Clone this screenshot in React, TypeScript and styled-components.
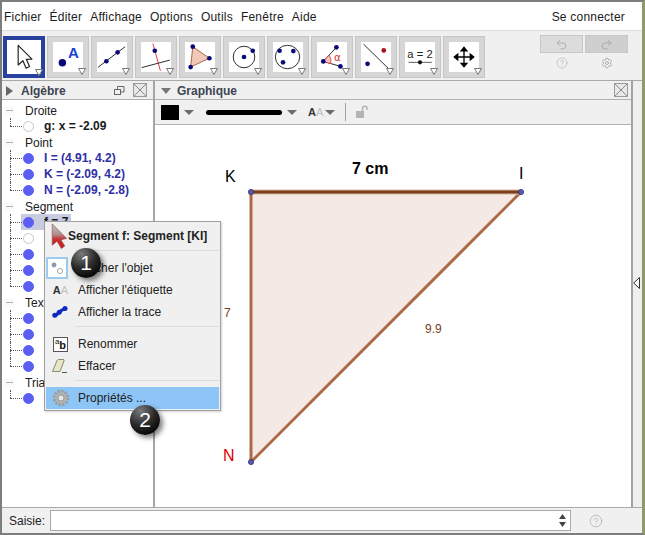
import React from 'react';
import styled, { createGlobalStyle } from 'styled-components';
import { CircleHelp, Settings, Undo2, Redo2 } from 'lucide-react';

const GlobalStyle = createGlobalStyle`
  html, body { margin: 0; padding: 0; background: #fff; }
  * { box-sizing: border-box; }
  body { font-family: "Liberation Sans", Arial, sans-serif; font-size: 12px; color: #1c1c1c; }
`;

const Frame = styled.div`
  position: relative;
  width: 645px;
  height: 535px;
  display: flex;
  flex-direction: column;
  overflow: hidden;
  background: #fff;
  border-top: 2px solid #7d7d7d;
  border-left: 2px solid #7d7d7d;
  border-bottom: 2px solid #7d7d7d;
  border-right: 3px solid #8f9a66;
`;

const MenuBar = styled.div`
  height: 28px;
  flex: none;
  display: flex;
  align-items: center;
  gap: 8px;
  padding: 1px 17px 0 2px;
  letter-spacing: 0.22px;
  background: #fff;
  span:last-child { margin-left: auto; }
`;

const Toolbar = styled.div`
  height: 51px;
  flex: none;
  display: flex;
  gap: 2px;
  padding: 5px 3px 0 1px;
  background: #f0f0f0;
  border-top: 1px solid #dcdcdc;
  border-bottom: 1px solid #a8a8a8;
`;

const ToolButton = styled.div<{ $active?: boolean }>`
  position: relative;
  width: 42px;
  height: 42px;
  flex: none;
  padding: ${(p) => (p.$active ? '4px' : '5px')};
  background: ${(p) => (p.$active ? '#28419c' : '#d6d6d6')};
  border: ${(p) => (p.$active ? 'none' : '1px solid #c6c6c6')};
`;

const ToolFace = styled.div`
  width: 100%;
  height: 100%;
  background: #fff;
  svg { display: block; width: 100%; height: 100%; overflow: visible; }
`;

const ToolCaret = styled.svg`
  position: absolute;
  right: 2px;
  bottom: 2px;
  width: 8px;
  height: 7px;
`;

const HistoryBox = styled.div`
  margin-left: auto;
  display: grid;
  grid-template-columns: 43px 43px;
  grid-template-rows: 18px auto;
  column-gap: 2px;
  row-gap: 4px;
  margin-top: -1px;
  margin-right: 11px;
`;

const HistoryButton = styled.div<{ $dark?: boolean }>`
  display: flex;
  align-items: center;
  justify-content: center;
  color: #a3a3a3;
  background: ${(p) => (p.$dark ? '#cfcfcf' : '#dcdcdc')};
  border: 1px solid #c8c8c8;
`;

const HistoryIcon = styled.div`
  display: flex;
  justify-content: center;
  color: #b0b0b0;
`;

const Main = styled.div`
  flex: 1;
  display: flex;
  min-height: 0;
`;

const AlgebraPanel = styled.div`
  width: 153px;
  flex: none;
  display: flex;
  flex-direction: column;
  border-right: 2px solid #a6a6a6;
`;

const PanelHeader = styled.div<{ $right: number; $gap: number }>`
  height: 19px;
  flex: none;
  display: flex;
  align-items: center;
  gap: ${(p) => p.$gap}px;
  padding: 1px ${(p) => p.$right}px 0 4px;
  background: #f0f0f0;
  border-bottom: 1px solid #b0b0b0;
`;

const PanelTitle = styled.span`
  flex: 1;
  font-weight: bold;
  color: #3d4553;
`;

const CloseBox = styled.svg`
  width: 14px;
  height: 14px;
  flex: none;
  margin-top: -1px;
`;

const Tree = styled.div`
  padding: 2px 0 0 2px;
`;

const GroupHead = styled.div`
  height: 16px;
  display: flex;
  align-items: center;
  gap: 11px;
  padding-top: 1px;
  color: #202020;
  white-space: nowrap;
`;

const Minus = styled.span`
  width: 10px;
  height: 10px;
  flex: none;
  display: flex;
  align-items: center;
  justify-content: center;
  background: #fafafa;
  &::before { content: ''; width: 7px; height: 1px; background: #b4b4b4; }
`;

const Leaf = styled.div`
  position: relative;
  height: 16px;
  display: flex;
  align-items: center;
  padding-left: 19px;
  &::before {
    content: '';
    position: absolute;
    left: 6px;
    top: 0;
    height: 100%;
    border-left: 1px dotted #555;
  }
  &:last-child::before { height: 50%; }
  &::after {
    content: '';
    position: absolute;
    left: 6px;
    top: 50%;
    width: 12px;
    border-top: 1px dotted #555;
  }
`;

const LeafBody = styled.div<{ $selected?: boolean }>`
  height: 16px;
  display: flex;
  align-items: center;
  gap: 10px;
  padding: 0 3px 0 2px;
  background: ${(p) => (p.$selected ? '#c9cce0' : 'transparent')};
  margin-left: -2px;
`;

const Marble = styled.span<{ $off?: boolean }>`
  width: 11px;
  height: 11px;
  flex: none;
  border-radius: 50%;
  background: ${(p) => (p.$off ? '#fff' : '#5b5ef2')};
  border: 1px solid ${(p) => (p.$off ? '#c8c8c8' : '#5b5ef2')};
`;

const LeafText = styled.span<{ $blue?: boolean }>`
  font-weight: bold;
  white-space: nowrap;
  color: ${(p) => (p.$blue ? '#2e2ea6' : '#1a1a1a')};
`;

const GraphicsPanel = styled.div`
  flex: 1;
  min-width: 0;
  display: flex;
  flex-direction: column;
`;

const StyleBar = styled.div`
  height: 25px;
  flex: none;
  display: flex;
  align-items: center;
  padding-left: 6px;
  background: #f0f0f0;
  border-bottom: 1px solid #b0b0b0;
`;

const Swatch = styled.span`
  width: 18px;
  height: 15px;
  background: #000;
`;

const LineSample = styled.span`
  width: 76px;
  height: 5px;
  margin-left: 12px;
  border-radius: 3px;
  background: #000;
`;

const Caret = styled.span<{ $left?: number }>`
  width: 0;
  height: 0;
  margin-left: ${(p) => p.$left ?? 5}px;
  border-left: 5px solid transparent;
  border-right: 5px solid transparent;
  border-top: 5px solid #6c6c6c;
`;

const AaGlyph = styled.span`
  font-size: 11px;
  font-weight: bold;
  margin-left: 11px;
  color: #333;
  b { color: #bdbdbd; font-weight: normal; }
`;

const Divider = styled.span`
  width: 1px;
  height: 18px;
  margin: 0 9px 0 10px;
  background: #a0a0a0;
`;

const Canvas = styled.div`
  flex: 1;
  min-height: 0;
  background: #fff;
  svg { display: block; }
`;

const SideStrip = styled.div`
  width: 11px;
  flex: none;
  display: flex;
  align-items: center;
  padding: 0 0 23px 0;
  background: #efefef;
  border-left: 2px solid #a2a2a2;
`;

const InputBar = styled.div`
  height: 26px;
  flex: none;
  display: flex;
  align-items: center;
  padding: 0 21px 0 7px;
  background: #f0f0f0;
  border-top: 1px solid #a8a8a8;
`;

const InputLabel = styled.span`
  width: 41px;
  flex: none;
  color: #222;
`;

const InputField = styled.div`
  flex: 1;
  height: 21px;
  display: flex;
  align-items: center;
  justify-content: flex-end;
  padding-right: 4px;
  background: #fff;
  border: 1px solid #a9a9a9;
`;

const InputHelp = styled.div`
  width: 50px;
  flex: none;
  display: flex;
  justify-content: center;
  color: #b0b0b0;
`;

const ContextMenu = styled.div`
  position: absolute;
  left: 42px;
  top: 219px;
  width: 177px;
  height: 190px;
  padding: 0 1px;
  background: #f0f0f0;
  border: 1px solid #a0a0a0;
  box-shadow: 1px 1px 2px rgba(0, 0, 0, 0.18);
`;

const MenuTitle = styled.div`
  height: 28px;
  margin-bottom: -3px;
  display: flex;
  align-items: center;
  padding: 0 0 0 22px;
  font-weight: bold;
  color: #222;
  white-space: nowrap;
`;

const MenuRule = styled.div`
  height: 1px;
  margin: 3px 0 6px 29px;
  background: #dcdcdc;
`;

const MenuItem = styled.div<{ $hot?: boolean }>`
  height: 22px;
  display: flex;
  align-items: center;
  color: #222;
  background: ${(p) => (p.$hot ? '#8cc5f6' : 'transparent')};
`;

const MenuIcon = styled.span`
  width: 32px;
  height: 22px;
  flex: none;
  display: flex;
  align-items: center;
  justify-content: center;
`;

const ToggleIcon = styled.span`
  display: flex;
  width: 22px;
  height: 22px;
  background: #fff;
  border: 2px solid #9ccbf0;
  margin-left: -10px;
`;

const SmallAa = styled.span`
  font-size: 11px;
  font-weight: bold;
  color: #333;
  margin-left: -3px;
  b { color: #c0c0c0; font-weight: normal; }
`;

const RenameBox = styled.span`
  width: 15px;
  height: 15px;
  font-size: 11px;
  font-weight: bold;
  line-height: 15px;
  text-align: center;
  margin-left: -3px;
  background: #fff;
  border: 1px solid #555;
  color: #111;
  sup { font-size: 8px; font-weight: normal; line-height: 0; }
`;

const StepBadge = styled.div<{ $x: number; $y: number }>`
  position: absolute;
  left: ${(p) => p.$x}px;
  top: ${(p) => p.$y}px;
  width: 30px;
  height: 30px;
  display: flex;
  align-items: center;
  justify-content: center;
  border-radius: 50%;
  font-size: 21px;
  color: #fff;
  background: radial-gradient(circle at 35% 20%, #7a7a7a 0%, #2c2c2c 45%, #050505 80%);
  box-shadow: 3px 3px 5px rgba(0, 0, 0, 0.5);
`;

const Pointer = styled.svg`
  position: absolute;
  left: 46px;
  top: 220px;
  width: 20px;
  height: 27px;
`;

const caret = (
  <ToolCaret viewBox="0 0 8 7">
    <path d="M0.5 0.5H7.5L4 6.5Z" fill="#fff" stroke="#777" strokeWidth="1" />
  </ToolCaret>
);

const Dot = ({ x, y, r = 2.5, c = '#0a0a78' }: { x: number; y: number; r?: number; c?: string }) => (
  <circle cx={x} cy={y} r={r} fill={c} />
);

const toolIcons: React.ReactNode[] = [
  <path d="M10.5 5L10.5 23.5L15 19.5L18 26.5L21.2 25L18.2 18.2L23.5 18Z" fill="#fff" stroke="#222" strokeWidth="1.1" strokeLinejoin="round" />,
  <>
    <Dot x={10} y={22} r={4} />
    <text x={16} y={17} fontSize="16" fontWeight="bold" fill="#1a3fd0" fontFamily="Liberation Sans">A</text>
  </>,
  <>
    <line x1={1} y1={27} x2={30} y2={5} stroke="#222" />
    <Dot x={10} y={20.5} />
    <Dot x={22} y={11} />
  </>,
  <>
    <line x1={12.7} y1={1.7} x2={20.7} y2={30.7} stroke="#e0303c" />
    <line x1={0.7} y1={27.3} x2={30.7} y2={19.3} stroke="#222" />
    <Dot x={14.7} y={9.3} />
  </>,
  <>
    <path d="M8.3 5L26 17.3L6 26.7Z" fill="#f0c8b8" stroke="#a3613c" />
    <Dot x={8.3} y={5} />
    <Dot x={26} y={17.3} />
    <Dot x={6} y={26.7} />
  </>,
  <>
    <circle cx={16} cy={16} r={11.5} fill="none" stroke="#222" />
    <Dot x={16} y={16} />
    <Dot x={25.3} y={9.3} />
  </>,
  <>
    <ellipse cx={15.5} cy={16} rx={13} ry={12.5} fill="none" stroke="#222" />
    <Dot x={7} y={9.3} />
    <Dot x={21.7} y={9.7} />
    <Dot x={10.7} y={21.7} />
  </>,
  <>
    <path d="M6.7 20.7L20.7 5.7M6.7 20.7L25 26" fill="none" stroke="#222" />
    <path d="M6.7 20.7L13 14Q16 18 14.5 23Z" fill="#f6c4c0" stroke="#e03030" strokeWidth="0.8" />
    <text x={18} y={20} fontSize="11" fill="#d83030" fontFamily="DejaVu Sans">α</text>
    <Dot x={20.7} y={5.7} />
    <Dot x={6.7} y={20.7} />
    <Dot x={25} y={26} />
  </>,
  <>
    <line x1={2.7} y1={2.3} x2={31} y2={30} stroke="#222" />
    <Dot x={24.3} y={9} c="#a81020" />
    <Dot x={7} y={23.3} />
  </>,
  <>
    <text x={16} y={17} fontSize="12" textAnchor="middle" fill="#222" fontFamily="Liberation Sans">a = 2</text>
    <line x1={3.7} y1={21.7} x2={28.7} y2={21.7} stroke="#555" />
    <Dot x={16} y={21.7} r={2.2} c="#111" />
  </>,
  <>
    <path d="M16 6V26M6 16H26" stroke="#000" strokeWidth="1.4" />
    <path d="M16 4.5L20.5 10H11.5ZM16 27.5L20.5 22H11.5ZM4.5 16L10 11.5V20.5ZM27.5 16L22 11.5V20.5Z" fill="#000" />
  </>,
];

const closeBox = (
  <CloseBox viewBox="0 0 14 14">
    <rect x="0.5" y="0.5" width="13" height="13" fill="#e8e8e8" stroke="#9a9a9a" />
    <path d="M1 1L13 13M13 1L1 13" stroke="#8a8a8a" strokeWidth="1" />
  </CloseBox>
);

type Row = { text?: string; blue?: boolean; off?: boolean; selected?: boolean };
const groups: { name: string; rows: Row[] }[] = [
  { name: 'Droite', rows: [{ text: 'g: x = -2.09', off: true }] },
  {
    name: 'Point',
    rows: [
      { text: 'I = (4.91, 4.2)', blue: true },
      { text: 'K = (-2.09, 4.2)', blue: true },
      { text: 'N = (-2.09, -2.8)', blue: true },
    ],
  },
  { name: 'Segment', rows: [{ text: 'f = 7', selected: true }, { off: true }, {}, {}, {}] },
  { name: 'Texte', rows: [{}, {}, {}, {}] },
  { name: 'Triangle', rows: [{}] },
];

const Gear = ({ size = 18 }: { size?: number }) => (
  <svg width={size} height={size} viewBox="0 0 18 18" style={{ marginLeft: -3 }}>
    <circle cx="9" cy="9" r="6" fill="#b2b2b2" />
    <circle cx="9" cy="9" r="7" fill="none" stroke="#9c9c9c" strokeWidth="2.6" strokeDasharray="2.4 1.27" />
    <circle cx="9" cy="9" r="3" fill="#e8e8e8" stroke="#8c8c8c" strokeWidth="0.8" />
  </svg>
);

const App = () => {
  return (
    <Frame>
      <GlobalStyle />
      <MenuBar>
        <span>Fichier</span>
        <span>Éditer</span>
        <span>Affichage</span>
        <span>Options</span>
        <span>Outils</span>
        <span>Fenêtre</span>
        <span>Aide</span>
        <span>Se connecter</span>
      </MenuBar>

      <Toolbar>
        {toolIcons.map((icon, i) => (
          <ToolButton key={i} $active={i === 0}>
            <ToolFace>
              <svg viewBox="0 0 32 32">{icon}</svg>
            </ToolFace>
            {caret}
          </ToolButton>
        ))}
        <HistoryBox>
          <HistoryButton>
            <Undo2 size={13} strokeWidth={1.4} />
          </HistoryButton>
          <HistoryButton $dark>
            <Redo2 size={13} strokeWidth={1.4} />
          </HistoryButton>
          <HistoryIcon>
            <CircleHelp size={12} strokeWidth={1.3} />
          </HistoryIcon>
          <HistoryIcon>
            <Settings size={12} strokeWidth={2} />
          </HistoryIcon>
        </HistoryBox>
      </Toolbar>

      <Main>
        <AlgebraPanel>
          <PanelHeader $right={6} $gap={8}>
            <svg width="7" height="10" viewBox="0 0 7 10">
              <path d="M0 0L7 5L0 10Z" fill="#666" />
            </svg>
            <PanelTitle>Algèbre</PanelTitle>
            <svg width="11" height="10" viewBox="0 0 11 10">
              <rect x="0.5" y="3.5" width="6" height="5" fill="none" stroke="#666" />
              <path d="M3.5 3V0.5H10V6H7" fill="none" stroke="#666" />
            </svg>
            {closeBox}
          </PanelHeader>
          <Tree>
            {groups.map((g) => (
              <div key={g.name}>
                <GroupHead>
                  <Minus />
                  {g.name}
                </GroupHead>
                <div>
                  {g.rows.map((r, i) => (
                    <Leaf key={i}>
                      <LeafBody $selected={r.selected}>
                        <Marble $off={r.off} />
                        {r.text && <LeafText $blue={r.blue}>{r.text}</LeafText>}
                      </LeafBody>
                    </Leaf>
                  ))}
                </div>
              </div>
            ))}
          </Tree>
        </AlgebraPanel>

        <GraphicsPanel>
          <PanelHeader $right={3} $gap={6}>
            <svg width="10" height="6" viewBox="0 0 10 6" style={{ marginLeft: 2 }}>
              <path d="M0 0H10L5 6Z" fill="#777" />
            </svg>
            <PanelTitle>Graphique</PanelTitle>
            {closeBox}
          </PanelHeader>
          <StyleBar>
            <Swatch />
            <Caret />
            <LineSample />
            <Caret />
            <AaGlyph>
              A<b>A</b>
            </AaGlyph>
            <Caret $left={2} />
            <Divider />
            <svg width="14" height="14" viewBox="0 0 14 14">
              <rect x="1" y="6" width="8" height="7" fill="#b4b4b4" />
              <path d="M7.5 6V3.5a2.3 2.3 0 0 1 4.6 0V5" fill="none" stroke="#b4b4b4" strokeWidth="1.5" />
            </svg>
          </StyleBar>
          <Canvas>
            <svg width="476" height="382" viewBox="155 125 476 382" fontFamily="Liberation Sans">
              <path d="M251 192H521L251 462Z" fill="#f4e9e4" />
              <line x1="251" y1="192" x2="251" y2="462" stroke="#ab6a45" strokeWidth="3" />
              <line x1="521" y1="192" x2="251" y2="462" stroke="#ab6a45" strokeWidth="3" />
              <line x1="251" y1="192" x2="521" y2="192" stroke="#d6b5a2" strokeWidth="5" />
              <line x1="251" y1="192" x2="521" y2="192" stroke="#7a3e1b" strokeWidth="3" />
              <circle cx="251" cy="192" r="2.6" fill="#5a5ab0" stroke="#222266" strokeWidth="0.7" />
              <circle cx="521" cy="192" r="2.6" fill="#5a5ab0" stroke="#222266" strokeWidth="0.7" />
              <circle cx="251" cy="462" r="2.6" fill="#5a5ab0" stroke="#222266" strokeWidth="0.7" />
              <text x="225" y="182" fontSize="16" fill="#000">K</text>
              <text x="519" y="179" fontSize="16" fill="#000">I</text>
              <text x="223" y="461" fontSize="16" fill="#e00000">N</text>
              <text x="352" y="174" fontSize="16" fontWeight="bold" fill="#000">7 cm</text>
              <text x="224" y="317" fontSize="12" fill="#7a3e1b">7</text>
              <text x="425" y="333" fontSize="12" fill="#7a3e1b">9.9</text>
            </svg>
          </Canvas>
        </GraphicsPanel>

        <SideStrip>
          <svg width="7" height="12" viewBox="0 0 7 12">
            <path d="M6.5 0.5V11.5L0.7 6Z" fill="#fff" stroke="#333" />
          </svg>
        </SideStrip>
      </Main>

      <InputBar>
        <InputLabel>Saisie:</InputLabel>
        <InputField>
          <svg width="7" height="13" viewBox="0 0 7 13">
            <path d="M3.5 0L7 5H0ZM3.5 13L0 8H7Z" fill="#444" />
          </svg>
        </InputField>
        <InputHelp>
          <CircleHelp size={14} strokeWidth={1.3} />
        </InputHelp>
      </InputBar>

      <ContextMenu>
        <MenuTitle>Segment f: Segment [KI]</MenuTitle>
        <MenuRule />
        <MenuItem>
          <MenuIcon>
            <ToggleIcon>
              <svg width="18" height="18" viewBox="0 0 18 18">
                <circle cx="6" cy="6" r="2.4" fill="#8a9ab0" />
                <circle cx="12" cy="12" r="2.6" fill="#fff" stroke="#a8a8a8" />
              </svg>
            </ToggleIcon>
          </MenuIcon>
          Afficher l'objet
        </MenuItem>
        <MenuItem>
          <MenuIcon>
            <SmallAa>
              A<b>A</b>
            </SmallAa>
          </MenuIcon>
          Afficher l'étiquette
        </MenuItem>
        <MenuItem>
          <MenuIcon>
            <svg width="16" height="12" viewBox="0 0 16 12" style={{ marginLeft: -4 }}>
              <path d="M2.5 9.5Q5 9 7 6.5T13.5 2.5" fill="none" stroke="#0c2cc0" strokeWidth="3.4" strokeLinecap="round" />
              <circle cx="2.8" cy="9.3" r="2.5" fill="#0c2cc0" />
              <circle cx="7.2" cy="6.3" r="2.5" fill="#0c2cc0" />
              <circle cx="13" cy="2.6" r="2.5" fill="#0c2cc0" />
            </svg>
          </MenuIcon>
          Afficher la trace
        </MenuItem>
        <MenuRule />
        <MenuItem>
          <MenuIcon>
            <RenameBox>
              <sup>a</sup>b
            </RenameBox>
          </MenuIcon>
          Renommer
        </MenuItem>
        <MenuItem>
          <MenuIcon>
            <svg width="17" height="16" viewBox="0 0 17 16" style={{ marginLeft: -5 }}>
              <path d="M1.5 13.5L6 2.5Q6.5 1.5 7.5 1.5H12Q13.5 1.5 13 3L9 13.5Z" fill="#e6e6c8" stroke="#8a8a70" />
              <path d="M11 14.5H16" stroke="#555" />
            </svg>
          </MenuIcon>
          Effacer
        </MenuItem>
        <MenuRule />
        <MenuItem $hot>
          <MenuIcon>
            <Gear />
          </MenuIcon>
          Propriétés ...
        </MenuItem>
      </ContextMenu>

      <Pointer viewBox="0 0 20 28">
        <defs>
          <linearGradient id="ptr" x1="0" y1="0" x2="0" y2="1">
            <stop offset="0" stopColor="#c4c4c4" />
            <stop offset="0.42" stopColor="#b09090" />
            <stop offset="0.62" stopColor="#c83030" />
            <stop offset="1" stopColor="#d01818" />
          </linearGradient>
        </defs>
        <path d="M4 2L4 24L9 20L13.5 27.5L17 25L13 18.5L19 17Z" fill="url(#ptr)" stroke="#8a5050" strokeWidth="0.7" />
      </Pointer>

      <StepBadge $x={69} $y={246}>1</StepBadge>
      <StepBadge $x={128} $y={403}>2</StepBadge>
    </Frame>
  );
};

export default App;
